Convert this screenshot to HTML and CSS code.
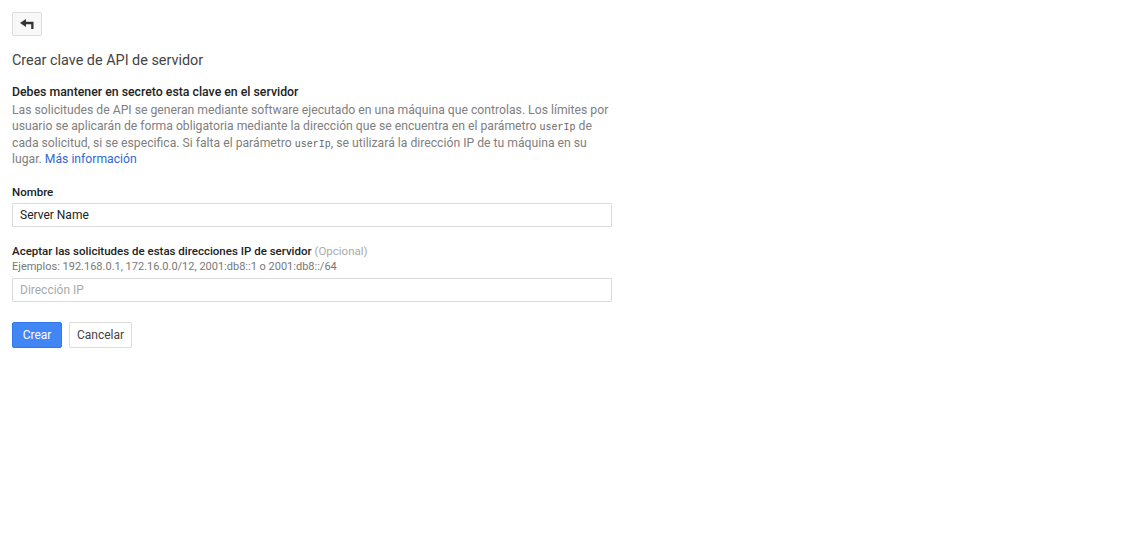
FILE: index.html
```html
<!DOCTYPE html>
<html lang="es">
<head>
    <meta charset="UTF-8">
    <title>Crear clave de API de servidor</title>
    <link rel="stylesheet" href="styles.css">
</head>
<body>
    <!-- Back -->
    <button class="back-btn" type="button" aria-label="Volver">
        <svg width="14" height="11" viewBox="0 0 14 11">
            <path d="M0 4 L6 0 L6 2.8 L13.5 2.8 L13.5 10 L11.2 10 L11.2 5.2 L6 5.2 L6 8 Z" fill="#333"/>
        </svg>
    </button>

    <h1 class="page-title">Crear clave de API de servidor</h1>

    <div class="form">
        <div class="notice">
            <div class="notice-title">Debes mantener en secreto esta clave en el servidor</div>
            <p class="notice-text">Las solicitudes de API se generan mediante software ejecutado en una máquina que controlas. Los límites por usuario se aplicarán de forma obligatoria mediante la dirección que se encuentra en el parámetro <code>userIp</code> de cada solicitud, si se especifica. Si falta el parámetro <code>userIp</code>, se utilizará la dirección IP de tu máquina en su lugar. <a href="#">Más información</a></p>
        </div>

        <div class="field">
            <label class="field-label">Nombre</label>
            <input class="text-input" type="text" value="Server Name">
        </div>

        <div class="field">
            <label class="field-label">Aceptar las solicitudes de estas direcciones IP de servidor <span class="optional">(Opcional)</span></label>
            <div class="field-hint">Ejemplos: 192.168.0.1, 172.16.0.0/12, 2001:db8::1 o 2001:db8::/64</div>
            <input class="text-input" type="text" placeholder="Dirección IP">
        </div>

        <div class="actions">
            <button class="btn btn-primary" type="button">Crear</button>
            <button class="btn" type="button">Cancelar</button>
        </div>
    </div>
</body>
</html>
```

FILE: styles.css
```css
/* Reset */
* {
    margin: 0;
    padding: 0;
    box-sizing: border-box;
}

body {
    font-family: Roboto, "Liberation Sans", sans-serif;
    font-size: 12.2px;
    color: #222;
    background: #fff;
    padding: 12px;
}

/* Back button */
.back-btn {
    display: flex;
    align-items: center;
    justify-content: center;
    width: 30px;
    height: 24px;
    background: #f8f8f8;
    border: 1px solid #dcdcdc;
    border-radius: 2px;
    cursor: pointer;
}

.page-title {
    font-size: 14.4px;
    font-weight: 400;
    color: #444;
    margin-top: 15px;
    line-height: 20px;
}

/* Form */
.form {
    width: 600px;
    margin-top: 12px;
}

.notice-title {
    font-weight: 500;
    font-size: 12.3px;
    color: #222;
    line-height: 18px;
}

.notice-text {
    color: #808080;
    line-height: 16.4px;
    margin-top: 1px;
}

.notice-text code {
    font-family: "Liberation Mono", "DejaVu Sans Mono", monospace;
    font-size: 10px;
    line-height: 1;
    color: #666;
}

.notice-text a {
    color: #3367d6;
    text-decoration: none;
}

.field {
    margin-top: 16px;
}

.field-label {
    display: block;
    font-size: 11.5px;
    font-weight: 500;
    color: #222;
    line-height: 16px;
    margin-bottom: 3px;
}

.optional {
    font-weight: 400;
    color: #aaa;
}

.field-hint {
    font-size: 11px;
    color: #777;
    line-height: 16px;
    margin-top: -3px;
    margin-bottom: 3px;
}

.text-input {
    display: block;
    width: 100%;
    height: 24px;
    border: 1px solid #d9d9d9;
    border-radius: 1px;
    padding: 0 7px;
    font-family: inherit;
    font-size: 12px;
    color: #222;
    outline: none;
}

.text-input::placeholder {
    color: #aaa;
}

/* Buttons */
.actions {
    display: flex;
    gap: 7px;
    margin-top: 20px;
}

.btn {
    height: 26px;
    padding: 0 7px;
    font-family: inherit;
    font-size: 12px;
    color: #444;
    background: #fff;
    border: 1px solid #dcdcdc;
    border-radius: 2px;
    cursor: pointer;
}

.btn-primary {
    width: 50px;
    color: #fff;
    background: #4285f4;
    border-color: #3079ed;
}
```
